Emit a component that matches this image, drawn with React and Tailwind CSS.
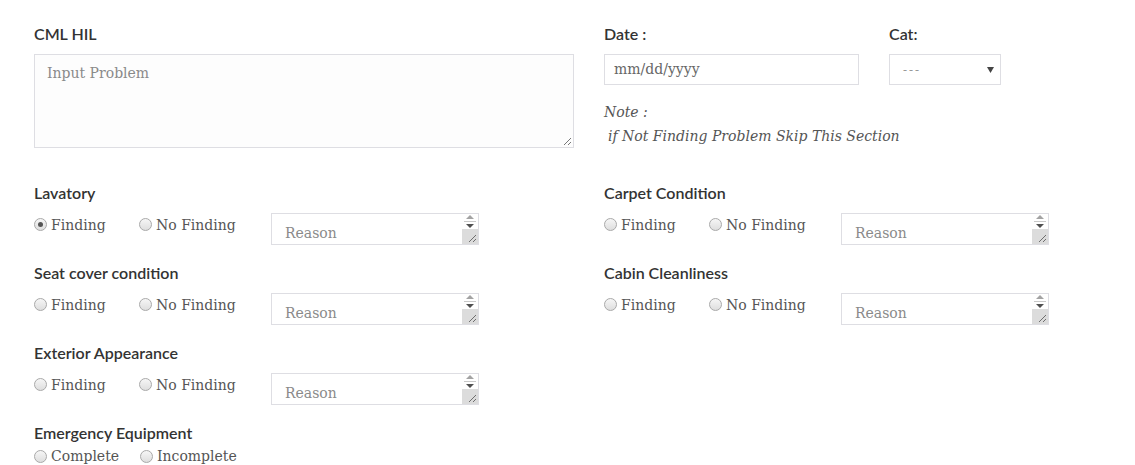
import React from "react";

const serif = { fontFamily: '"DejaVu Serif", "Liberation Serif", serif' };
const sans = { fontFamily: 'Lato, "Liberation Sans", sans-serif' };

function Radio({ checked, label, width }) {
  return (
    <label className="flex items-center h-5 shrink-0" style={{ width }}>
      <span className="w-[13px] h-[13px] rounded-full border border-[#a9a9a9] bg-gradient-to-b from-[#f6f6f6] to-[#dedede] flex items-center justify-center mr-[4px] shrink-0">
        {checked && <span className="w-[5px] h-[5px] rounded-full bg-[#555]" />}
      </span>
      <span className="text-[14px] text-[#555] leading-5" style={serif}>{label}</span>
    </label>
  );
}

function Reason() {
  return (
    <div className="w-[208px] h-[32px] border border-[#dedee3] bg-white flex">
      <div className="flex-1 pl-[13px] pt-[9px] text-[14px] leading-5 text-[#8a8a8a]" style={serif}>Reason</div>
      <div className="w-[16px] flex flex-col">
        <div className="h-[15px] bg-white flex flex-col items-center justify-center gap-[2px]">
          <svg width="8" height="4" viewBox="0 0 8 4"><path d="M4 0L8 4H0z" fill="#a3a3a3" /></svg>
          <div className="w-[12px] h-px bg-[#c8c8c8]" />
          <svg width="8" height="4" viewBox="0 0 8 4"><path d="M0 0H8L4 4z" fill="#505050" /></svg>
        </div>
        <div className="flex-1 bg-[#dcdcdc] relative">
          <svg className="absolute right-[1px] bottom-[1px]" width="10" height="10" viewBox="0 0 10 10">
            <path d="M9 2L2 9M9 6L6 9" stroke="#6e6e6e" strokeWidth="1" />
          </svg>
        </div>
      </div>
    </div>
  );
}

function Label({ children }) {
  return <div className="text-[16px] font-semibold leading-5 text-[#333]" style={sans}>{children}</div>;
}

function Item({ title, checked }) {
  return (
    <div className="h-[80px]">
      <Label>{title}</Label>
      <div className="flex items-start mt-[10px]">
        <div className="flex items-center h-[22px] pt-[1px]">
          <Radio checked={checked} label="Finding" width="105px" />
          <Radio label="No Finding" width="132px" />
        </div>
        <Reason />
      </div>
    </div>
  );
}

export default function App() {
  return (
    <div className="w-[1135px] h-[465px] bg-white overflow-hidden px-[34px] pt-[24px]">
      <div className="flex">
        <div className="w-[540px]">
          <Label>CML HIL</Label>
          <div className="mt-[10px] h-[94px] border border-[#dedee3] bg-[#fdfdfd] relative px-[12px] pt-[8px]">
            <div className="text-[14px] text-[#8a8a8a] leading-5" style={serif}>Input Problem</div>
            <svg className="absolute right-[1px] bottom-[1px]" width="9" height="9" viewBox="0 0 9 9">
              <path d="M8 1L1 8M8 5L5 8" stroke="#777" strokeWidth="1" />
            </svg>
          </div>
        </div>
        <div className="ml-[30px]">
          <div className="flex">
            <div className="w-[285px]">
              <Label>Date :</Label>
              <div className="mt-[10px] w-[255px] h-[31px] border border-[#dedee3] bg-white flex items-center pl-[9px] text-[14px] text-[#666]" style={serif}>mm/dd/yyyy</div>
            </div>
            <div>
              <Label>Cat:</Label>
              <div className="mt-[10px] w-[112px] h-[31px] border border-[#dedee3] bg-white flex items-center justify-between pl-[13px] pr-[6px]">
                <span className="text-[12px] tracking-[2px] text-[#999]" style={serif}>---</span>
                <svg width="7" height="6" viewBox="0 0 7 6"><path d="M0 0H7L3.5 6z" fill="#444" /></svg>
              </div>
            </div>
          </div>
          <div className="mt-[15px] text-[14px] italic leading-6 text-[#555]" style={serif}>Note :</div>
          <div className="pl-[4px] text-[14px] italic leading-6 text-[#555]" style={serif}>if Not Finding Problem Skip This Section</div>
        </div>
      </div>
      <div className="flex mt-[35px]">
        <div className="w-[570px]">
          <Item title="Lavatory" checked />
          <Item title="Seat cover condition" />
          <Item title="Exterior Appearance" />
          <div>
            <Label>Emergency Equipment</Label>
            <div className="flex items-center mt-[3px]">
              <Radio label="Complete" width="106px" />
              <Radio label="Incomplete" width="132px" />
            </div>
          </div>
        </div>
        <div>
          <Item title="Carpet Condition" />
          <Item title="Cabin Cleanliness" />
        </div>
      </div>
    </div>
  );
}
